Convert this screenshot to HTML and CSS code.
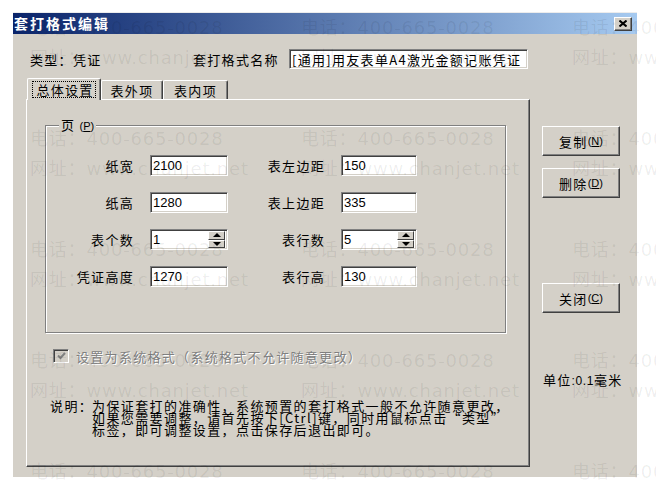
FILE: index.html
```html
<!DOCTYPE html>
<html lang="zh-CN">
  <head>
    <meta charset="UTF-8" />
    <title>套打格式编辑</title>
    <link rel="stylesheet" href="styles.css">
  </head>
  <body>
    <div class="dialog">
      <div class="titlebar">
        <span class="title">套打格式编辑</span>
        <span class="close">
          <svg width="8" height="7" viewBox="0 0 8 7"><path d="M0.5 0.5 L7.5 6.5 M7.5 0.5 L0.5 6.5" stroke="#000" stroke-width="2" /></svg>
        </span>
      </div>

      <div class="content">
        <div class="main">
          <div class="head">
            <span class="kind">类型：凭证</span>
            <span class="name-label">套打格式名称</span>
            <div class="field name-field">[通用]用友表单A4激光金额记账凭证</div>
          </div>

          <div class="tabs">
            <span class="tab active"><span class="focus">总体设置</span></span>
            <span class="tab tab-2">表外项</span>
            <span class="tab tab-3">表内项</span>
          </div>

          <div class="panel">
            <div class="group">
              <span class="legend">页 <small>(<u>P</u>)</small></span>
              <div class="grid">
                <span class="lbl">纸宽</span>
                <div class="field num">2100</div>
                <span class="lbl">表左边距</span>
                <div class="field num">150</div>

                <span class="lbl">纸高</span>
                <div class="field num">1280</div>
                <span class="lbl">表上边距</span>
                <div class="field num">335</div>

                <span class="lbl">表个数</span>
                <div class="field num spin">
                  <span class="val">1</span>
                  <span class="spin-btns"><span class="spin-btn up"></span><span class="spin-btn down"></span></span>
                </div>
                <span class="lbl">表行数</span>
                <div class="field num spin">
                  <span class="val">5</span>
                  <span class="spin-btns"><span class="spin-btn up"></span><span class="spin-btn down"></span></span>
                </div>

                <span class="lbl">凭证高度</span>
                <div class="field num">1270</div>
                <span class="lbl">表行高</span>
                <div class="field num">130</div>
              </div>
            </div>

            <div class="check-row">
              <span class="checkbox">
                <svg width="9" height="8" viewBox="0 0 9 8"><path d="M1 3.5 L3.5 6 L8 1" fill="none" stroke="#808080" stroke-width="2" /></svg>
              </span>
              <span class="disabled">设置为系统格式（系统格式不允许随意更改）</span>
            </div>

            <div class="note">
              <span class="note-label">说明：</span>
              <span class="note-text">为保证套打的准确性，系统预置的套打格式一般不允许随意更改，<br>如果您需要调整，请首先按下[Ctrl]键，同时用鼠标点击“类型”<br>标签，即可调整设置，点击保存后退出即可。</span>
            </div>
          </div>
        </div>

        <div class="side">
          <span class="btn btn-copy">复制 <small>(<u>N</u>)</small></span>
          <span class="btn btn-del">删除 <small>(<u>D</u>)</small></span>
          <span class="btn btn-close">关闭 <small>(<u>C</u>)</small></span>
          <span class="unit">单位<small>:0.1</small>毫米</span>
        </div>
      </div>
    </div>

    <div class="watermark">
      <div class="wm"><span>电话：400-665-0028</span><span>网址：www.chanjet.net</span></div>
      <div class="wm"><span>电话：400-665-0028</span><span>网址：www.chanjet.net</span></div>
      <div class="wm"><span>电话：400-665-0028</span><span>网址：www.chanjet.net</span></div>
      <div class="wm"><span>电话：400-665-0028</span><span>网址：www.chanjet.net</span></div>
      <div class="wm"><span>电话：400-665-0028</span><span>网址：www.chanjet.net</span></div>
      <div class="wm"><span>电话：400-665-0028</span><span>网址：www.chanjet.net</span></div>
      <div class="wm"><span>电话：400-665-0028</span><span>网址：www.chanjet.net</span></div>
      <div class="wm"><span>电话：400-665-0028</span><span>网址：www.chanjet.net</span></div>
      <div class="wm"><span>电话：400-665-0028</span><span>网址：www.chanjet.net</span></div>
      <div class="wm"><span>电话：400-665-0028</span><span>网址：www.chanjet.net</span></div>
      <div class="wm"><span>电话：400-665-0028</span><span>网址：www.chanjet.net</span></div>
      <div class="wm"><span>电话：400-665-0028</span><span>网址：www.chanjet.net</span></div>
      <div class="wm"><span>电话：400-665-0028</span><span>网址：www.chanjet.net</span></div>
      <div class="wm"><span>电话：400-665-0028</span><span>网址：www.chanjet.net</span></div>
      <div class="wm"><span>电话：400-665-0028</span></div>
    </div>
  </body>
</html>
```

FILE: styles.css
```css
/* 基本 */
* {
  box-sizing: border-box;
}
body {
  margin: 0;
  width: 656px;
  height: 486px;
  position: relative;
  overflow: hidden;
  background: #fff;
  color: #000;
  font-family: "Noto Sans CJK SC", sans-serif;
  font-size: 13px;
  letter-spacing: 1.3px;
}
small {
  font-family: "Liberation Sans", sans-serif;
  font-size: 11px;
  letter-spacing: 0;
}

/* 对话框 */
.dialog {
  margin: 12px 0 0 13px;
  width: 624px;
  height: 465px;
  border-top: 1px solid #ececec;
  background: #d4d0c8;
  display: flex;
  flex-direction: column;
}
.titlebar {
  height: 21px;
  padding: 0 5px 0 1px;
  background: linear-gradient(to right, #0a246a, #a6caf0);
  display: flex;
  align-items: center;
  justify-content: space-between;
}
.title {
  color: #fff;
  font-weight: bold;
  font-size: 14px;
  letter-spacing: 2px;
  line-height: 21px;
}
.close {
  width: 18px;
  height: 14px;
  background: #d4d0c8;
  border: 1px solid;
  border-color: #fff #404040 #404040 #fff;
  box-shadow: inset -1px -1px #808080;
  display: flex;
  align-items: center;
  justify-content: center;
}

.content {
  flex: 1;
  display: flex;
  padding-left: 13px;
}
.main {
  width: 504px;
}

/* 凹陷输入框 */
.field {
  background: #fff;
  border: 1px solid;
  border-color: #808080 #fff #fff #808080;
  box-shadow: inset 1px 1px #404040, inset -1px -1px #d4d0c8;
  padding: 0 2px;
  display: flex;
  align-items: center;
  white-space: nowrap;
  overflow: hidden;
}

.head {
  height: 20px;
  margin-top: 15px;
  display: flex;
  align-items: center;
}
.kind {
  width: 167px;
  padding-left: 4px;
}
.name-label {
  width: 96px;
}
.name-field {
  width: 239px;
  height: 20px;
}

/* 标签页 */
.tabs {
  height: 21px;
  margin-top: 9px;
  padding-left: 1px;
  display: flex;
  align-items: flex-end;
}
.tab {
  height: 19px;
  border-top: 1px solid #fff;
  border-left: 1px solid #fff;
  border-right: 1px solid #404040;
  box-shadow: inset -1px 0 #808080;
  border-radius: 2px 2px 0 0;
  display: flex;
  align-items: center;
  justify-content: center;
  background: #d4d0c8;
}
.tab.active {
  width: 74px;
  height: 22px;
  margin-bottom: -1px;
  position: relative;
  z-index: 1;
}
.tab-2 {
  width: 62px;
}
.tab-3 {
  width: 65px;
}
.focus {
  outline: 1px dotted #000;
  padding: 0 1px 0 3px;
  line-height: 15px;
}

.panel {
  height: 368px;
  border: 1px solid;
  border-color: #fff #404040 #404040 #fff;
  box-shadow: inset -1px -1px #808080;
  padding: 25px 0 0 18px;
}

/* 分组框 */
.group {
  position: relative;
  width: 461px;
  height: 208px;
  border: 1px solid #808080;
  box-shadow: inset 1px 1px #fff, 1px 1px #fff;
}
.legend {
  position: absolute;
  top: -9px;
  left: 13px;
  padding: 0 2px;
  background: #d4d0c8;
  line-height: 16px;
}
.grid {
  padding-top: 29px;
  display: grid;
  grid-template-columns: 104px 78px 113px 76px;
  grid-template-rows: repeat(4, 21px);
  row-gap: 16px;
}
.lbl {
  text-align: right;
  padding-right: 16px;
  line-height: 21px;
}
.num {
  font-family: "Liberation Sans", sans-serif;
  font-size: 13px;
  letter-spacing: 0;
}
.spin {
  justify-content: space-between;
  padding-right: 2px;
}
.spin-btns {
  width: 17px;
  height: 17px;
  display: flex;
  flex-direction: column;
}
.spin-btn {
  flex: 1;
  background: #d4d0c8;
  border: 1px solid;
  border-color: #fff #404040 #404040 #fff;
  display: flex;
  align-items: center;
  justify-content: center;
}
.spin-btn::before {
  content: "";
  border-left: 4px solid transparent;
  border-right: 4px solid transparent;
}
.spin-btn.up::before {
  border-bottom: 4px solid #000;
}
.spin-btn.down::before {
  border-top: 4px solid #000;
}

/* 复选框 */
.check-row {
  margin: 16px 0 0 8px;
  height: 14px;
  display: flex;
  align-items: center;
}
.checkbox {
  width: 16px;
  height: 14px;
  background: #d4d0c8;
  border: 1px solid;
  border-color: #808080 #fff #fff #808080;
  box-shadow: inset 1px 1px #404040, inset -1px -1px #d4d0c8;
  display: flex;
  align-items: center;
  justify-content: center;
}
.disabled {
  margin-left: 7px;
  color: #808080;
  text-shadow: 1px 1px 0 #fff;
}

/* 说明 */
.note {
  margin: 37px 0 0 5px;
  display: flex;
  line-height: 12px;
  letter-spacing: 1.4px;
}
.note-label {
  width: 42px;
  flex: none;
  white-space: nowrap;
}
.note-text {
  white-space: nowrap;
}

/* 右侧按钮 */
.side {
  width: 107px;
  padding: 92px 0 0 12px;
  display: flex;
  flex-direction: column;
  align-items: flex-start;
}
.btn {
  width: 78px;
  height: 30px;
  border: 1px solid;
  border-color: #fff #404040 #404040 #fff;
  box-shadow: inset -1px -1px #808080;
  display: flex;
  align-items: center;
  justify-content: center;
}
.btn-del {
  margin-top: 12px;
}
.btn-close {
  margin-top: 85px;
}
.unit {
  margin: 60px 0 0 1px;
  line-height: 14px;
}
.unit small {
  font-size: 12px;
  letter-spacing: 0.6px;
}

/* 水印 */
.watermark {
  position: absolute;
  top: 0;
  left: 0;
  width: 656px;
  height: 486px;
  overflow: hidden;
  padding: 17px 0 0 30px;
  pointer-events: none;
  display: grid;
  grid-template-columns: repeat(3, 271px);
  grid-auto-rows: 111px;
  font-family: "DejaVu Sans", "Noto Sans CJK SC", sans-serif;
  font-size: 18px;
  letter-spacing: 0.8px;
  color: rgba(0, 0, 0, 0.07);
  white-space: nowrap;
}
.wm {
  display: flex;
  flex-direction: column;
  gap: 8px;
  line-height: 22px;
}
```
